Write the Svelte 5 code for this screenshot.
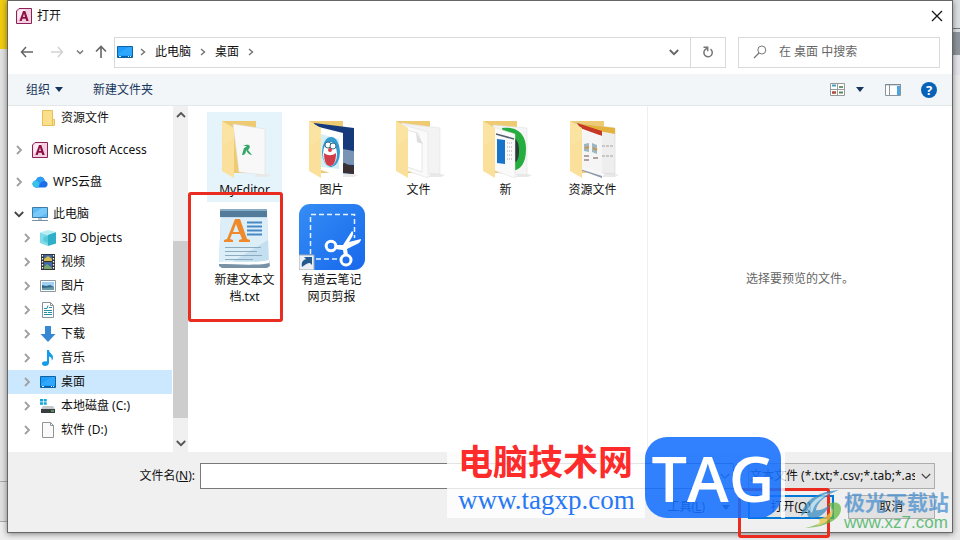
<script>
  const places = [
    { name: '资源文件', icon: 'folder', level: 1, gap: true },
    { name: 'Microsoft Access', icon: 'access', level: 0, arrow: 'right', gap: true },
    { name: 'WPS云盘', icon: 'cloud', level: 0, arrow: 'right', gap: true },
    { name: '此电脑', icon: 'pc', level: 0, arrow: 'down' },
    { name: '3D Objects', icon: 'cube', level: 1, arrow: 'right' },
    { name: '视频', icon: 'film', level: 1, arrow: 'right' },
    { name: '图片', icon: 'picture', level: 1, arrow: 'right' },
    { name: '文档', icon: 'doc', level: 1, arrow: 'right' },
    { name: '下载', icon: 'down', level: 1, arrow: 'right' },
    { name: '音乐', icon: 'music', level: 1, arrow: 'right' },
    { name: '桌面', icon: 'desktop', level: 1, arrow: 'right', selected: true },
    { name: '本地磁盘 (C:)', icon: 'disk', level: 1, arrow: 'right' },
    { name: '软件 (D:)', icon: 'page', level: 1, arrow: 'right' }
  ];
  const files = [
    { name: 'MyEditor', icon: 'editor', hover: true },
    { name: '图片', icon: 'photos' },
    { name: '文件', icon: 'papers' },
    { name: '新', icon: 'fresh' },
    { name: '资源文件', icon: 'resources' },
    { name: '新建文本文档.txt', icon: 'text', marked: true },
    { name: '有道云笔记网页剪报', icon: 'clip' }
  ];
</script>

{#snippet accessIcon()}
  <svg width="16" height="16" viewBox="0 0 16 16"><path d="M3 .5h12.500v15H.5V3z" fill="#f3cfe0" stroke="#8c2158" /><path d="M1.500 4 4 1.500h6L1.500 12z" fill="#fff" opacity=".6" /><path d="M3.500 13 7 3h2.300l3.400 10h-2.400l-.7-2.200H6.400L5.700 13zM7 9h2L8 5.600z" fill="#8a1045" fill-rule="evenodd" /></svg>
{/snippet}

{#snippet desktopIcon()}
  <svg width="16" height="16" viewBox="0 0 16 16"><path d="M.5 2.500h15v11H.5z" fill="#1e9dfa" stroke="#0b62a5" /><path d="M1 10 11 3h4v8H1z" fill="#38aeff" opacity=".6" /><path d="M1 12.500h14" stroke="#0762ab" /><path d="M2 12.500h2M11 12.500h1M13 12.500h1" stroke="#d7efff" /></svg>
{/snippet}

{#snippet chevron(dir, weight = 1.8)}
  <svg class="chev" width="10" height="10" viewBox="0 0 10 10">
    <path d={dir === 'down' ? 'M.8 3 5 7.200 9.200 3' : dir === 'up' ? 'M1 7 5 3l4 4' : 'M3 1l4 4-4 4'} fill="none" stroke="currentColor" stroke-width={weight} />
  </svg>
{/snippet}

{#snippet separator()}
  <span class="sep"><svg width="6" height="8" viewBox="0 0 6 8"><path d="M1 1l3.500 3L1 7" fill="none" stroke="#777" stroke-width="1.500" /></svg></span>
{/snippet}

{#snippet placeIcon(kind)}
  {#if kind === 'access'}
    {@render accessIcon()}
  {:else if kind === 'desktop'}
    {@render desktopIcon()}
  {:else}
    <svg width="16" height="16" viewBox="0 0 16 16">
      {#if kind === 'folder'}
        <path d="M2.500.5h10v9h2v6h-12z" fill="#fbdf8b" stroke="#e6bf5a" /><path d="M12.500 9.500v6" stroke="#e6bf5a" />
      {:else if kind === 'cloud'}
        <path d="M4.500 13.500C1 13.500 0 10 1 8.300 1.800 6.800 3.500 6.500 4 6.500 5 3.300 7.500 2.500 9.500 3c2.500.5 3 2.500 3.200 4C15 7.500 16 9 15.500 11c-.5 2-2 2.500-3.500 2.500z" fill="#1d6eea" /><path d="M4 6.500c1-3.200 3.500-4 5.500-3.500 2 .5 3 2.300 3.200 4C9 7 8 10 6 13.500H4.500C1 13.500 0 10 1 8.300c.7-1.300 2-1.800 3-1.800z" fill="#2e9df2" /><path d="M1 8.300C2 6.500 5 6 6.500 8 8 10 7 12 6 13.500H4.500C1 13.500 0 10 1 8.300z" fill="#38c4ea" />
      {:else if kind === 'pc'}
        <path d="M.5 1.500h15v10H.5z" fill="#5dbcf5" stroke="#3f7ba4" /><path d="M1 8 10 2h5v5L7 11H1z" fill="#8ed3fb" opacity=".6" /><path d="M6 12h4v2H6z" fill="#b9c9d3" /><path d="M0 14.500h16" stroke="#7890a0" />
      {:else if kind === 'cube'}
        <path d="M8 4l8-2v11.500L8 16z" fill="#2fb0c8" /><path d="M0 2.500 8 5v11l-8-3z" fill="#7fdbe7" /><path d="M8 0l8 2-8 3-8-2.500z" fill="#b8edf3" /><path d="M3.500 7 8 5.500V13l-4.500-2z" fill="#3bbdd0" opacity=".6" />
      {:else if kind === 'film'}
        <path d="M1 0h14v16H1z" fill="#30333b" /><path d="M4 1h8v6H4zM4 8h8v7H4z" fill="#4168a4" /><path d="M4 5l4-3 4 3v2H4z" fill="#d7bc4e" /><path d="M4 13l3-3 5 4v1H4z" fill="#79a66b" /><path d="M2.500 1v15M13.500 1v15" stroke="#fff" stroke-width="1.300" stroke-dasharray="1.500 1.500" />
      {:else if kind === 'picture'}
        <path d="M.5 2.500h15v11H.5z" fill="#fff" stroke="#8d9aa4" /><path d="M2 4h12v8H2z" fill="#9ed1f4" /><path d="M2 7l4 1 4-1 4 2v3H2z" fill="#326785" /><path d="M2 10l12-1v3H2z" fill="#669ba7" />
      {:else if kind === 'doc'}
        <path d="M2.500.5h8l3 3v12h-11z" fill="#fff" stroke="#87939b" /><path d="M10.500.5v3h3" fill="none" stroke="#87939b" /><path d="M4 6.500h3l1-3M9 5.500h3M4 8.500h8M4 10.500h3M8 10.500h4M4 12.500h8" fill="none" stroke="#258fa8" />
      {:else if kind === 'down'}
        <path d="M5 0h6v8h4.500L8 16 .5 8H5z" fill="#3788d3" />
      {:else if kind === 'music'}
        <path d="M7 0h2c0 3 4 4 4 7.500 0 1.500-.6 2.500-1.200 3.200C12 8 11 7 9 6.500V13c0 2-2 3-4 3s-3-1-3-2.500S4 11 7 11.500z" fill="#159ce8" />
      {:else if kind === 'disk'}
        <path d="M0 1h3v2.500H0zM3.700 1h3v2.500h-3zM0 4.200h3v2.500H0zM3.700 4.200h3v2.500h-3z" fill="#16a5d8" /><path d="M3 8h10l2 3H1z" fill="#c5c9cc" /><path d="M1 11h14v4H1z" fill="#3a3d40" /><path d="M11 13h3" stroke="#6bec74" />
      {:else}
        <path d="M2.500.5h8l3 3v12h-11z" fill="#fafafa" stroke="#949494" /><path d="M10.500.5v3h3" fill="none" stroke="#949494" />
      {/if}
    </svg>
  {/if}
{/snippet}

{#snippet fileIcon(kind)}
  <svg width="66" height="66" viewBox="0 0 66 66">
    {#if kind === 'text'}
      <path d="M7 56h50l1 6-3 2H10l-3-2z" fill="#7893a8" />
      <path d="M9 6h46l2 52H7z" fill="#c3dff0" /><path d="M9 14h46l1 22L20 58H7z" fill="#e7f4fa" opacity=".7" />
      <path d="M8 6h47v7H8z" fill="#537c9b" /><path d="M8 5h47v2H8z" fill="#86adc5" />
      <path d="M7 58c17-2 34 2 50-2v3c-12 3-34 1-50 1z" fill="#fff" />
      <path d="M12 38v-2l3-1 8-20h5l7 20 3 1v2H27v-2l3-1-2-5h-8l-2 5 3 1v2zm9-10h6l-3-8z" fill="#ee8a2b" fill-rule="evenodd" />
      <path d="M35 18.500h15M35 22.500h15M35 26.500h15M35 30.500h15" stroke="#4689c6" stroke-width="2" />
      <path d="M13 43.500h36M13 47.500h32M13 51.500h37M13 55.500h28" stroke="#8eacc0" />
    {:else if kind === 'clip'}
      <defs><linearGradient id="clipBlue" x1="0" y1="0" x2="1" y2="1"><stop offset="0" stop-color="#358df4" /><stop offset="1" stop-color="#1768ec" /></linearGradient></defs>
      <rect width="66" height="66" rx="11" fill="url(#clipBlue)" />
      <path d="M11.500 50V10.500h44V34M17 55h24" fill="none" stroke="#e6f2ff" stroke-width="1.500" stroke-dasharray="5 3" />
      <g fill="none" stroke="#fff" stroke-width="3"><circle cx="32" cy="42" r="4.800" /><circle cx="47" cy="56" r="5" /></g>
      <path d="M36 41l8 0 9-14c2 1 1 4 0 6l-3 5 12-3c0 3-3 5-6 6l-8 4 1 6-4 1-1-6-8-1z" fill="#fff" />
      <path d="M0 51h15v15H0z" fill="#edf1f5" stroke="#9cabb8" /><path d="M3 63c-1-5 1-7 4-8l-2-2h8v8l-2-2c-3 0-5 2-8 4z" fill="#235a90" />
    {:else}
      <path d="M42 63h13l4-2-13-3z" fill="#e9e9e9" />
      <path d="M10 7h34v52H20z" fill="#eecb72" />
      {#if kind === 'photos'}
        <path d="M15 9 55 14v46l-28-2z" fill="#153a7b" /><path d="M38 34l17 3v14l-17-1z" fill="#7893b3" /><path d="M40 50l6-1 3 2 6 1v8l-15-2z" fill="#3b3031" />
        <path d="M20 13l24 6v45l-22-8z" fill="#fff" /><path d="M22 20l18 5v30l-18-2z" fill="#d4eef9" />
        <ellipse cx="32" cy="38" rx="9" ry="15" fill="#349bd1" /><ellipse cx="31" cy="40" rx="7" ry="12" fill="#fff" /><path d="M25 39c4 3 8 3 12 0 0 8-2 13-6 13s-6-5-6-13z" fill="#d13c49" /><circle cx="29" cy="31" r="3" fill="#fff" stroke="#376b86" /><circle cx="34" cy="32" r="3" fill="#fff" stroke="#376b86" /><circle cx="31" cy="36" r="2" fill="#df3e45" />
      {:else if kind === 'fresh'}
        <path d="M20 11 54 14v47l-28-2z" fill="#f5f5f5" stroke="#ddd" stroke-width=".5" /><path d="M29 14c18-2 24 9 24 21 0 14-5 22-16 22z" fill="#25ae3f" /><path d="M36 23c8 0 10 6 10 14s-2 12-8 13z" fill="#293b37" />
        <path d="M20 13l22 7v44l-22-8z" fill="#fafafa" stroke="#ddd" stroke-width=".5" /><path d="M23 20l18 5" stroke="#556170" stroke-width="1.500" /><path d="M24 25l8 1v24l-8-1z" fill="#1774ca" /><path d="M34 29h6M34 33h6M34 37h6M34 41h6M34 45h6" stroke="#aaa" stroke-dasharray="1 1" />
      {:else if kind === 'resources'}
        <path d="M15 9l40 5v46l-28-2z" fill="#eee" stroke="#ccc" stroke-width=".5" /><path d="M15 9l40 5v6l-32-6z" fill="#e4b33d" /><path d="M42 32h12M42 42h12" stroke="#a99f9f" stroke-dasharray="3 1" />
        <path d="M20 12l22 7v45l-22-8z" fill="#f7f7f7" /><path d="M17 9l25 8v5l-22-8z" fill="#c53825" /><path d="M20 17l22 5v36l-22-6z" fill="#f5f5f6" /><path d="M24 30l5-1v9l-5-1zM32 29l5 2v9l-5-2z" fill="#9bb8c3" /><path d="M25 34l4-1M33 34l4 2" stroke="#ce974e" stroke-width="2" /><path d="M24 42h5M33 44h5M24 46h5" stroke="#b2a09c" stroke-width="2" /><path d="M20 55l22 7v2l-22-8z" fill="#8d99ae" />
      {:else if kind === 'papers'}
        <path d="M15 9l39 5v46l-28-1z" fill="#f3f3f3" stroke="#ddd" stroke-width=".5" /><path d="M18 11l24 7v46l-23-8z" fill="#fafafa" stroke="#ddd" stroke-width=".5" /><path d="M21 16l11 3 4 11v28l-15-5z" fill="#fff" stroke="#d8d8d0" stroke-width=".6" /><path d="M30 18l7 12-6-2z" fill="#ddd" />
      {:else}
        <path d="M21 10l32 5v46l-26-3z" fill="#f8f8f8" stroke="#ddd" stroke-width=".5" /><path d="M31 32c6-3 9 0 5 4l4 5c-3 0-5-3-6-5 0 3-1 5-4 5l2-7c2-1 4-2 1-2z" fill="#33a66a" />
      {/if}
      <path d="M10 7 22 14v50L10 57z" fill="#fae09a" /><path d="M10 7 22 14v10L11 32z" fill="#fff0bd" opacity=".25" />
    {/if}
  </svg>
{/snippet}

<div class="screen">
  <div class="backdrop" aria-hidden="true"><i class="yellow"></i><i class="grey"></i></div>

  <main class="dialog">
    <header class="title">
      {@render accessIcon()}
      <h1>打开</h1>
      <button class="plain close" aria-label="关闭"><svg width="12" height="12" viewBox="0 0 12 12"><path d="M1 1l10 10M11 1 1 11" stroke="#111" stroke-width="1.200" /></svg></button>
    </header>

    <nav class="navigate">
      <button class="plain back" aria-label="后退"><svg width="14" height="12" viewBox="0 0 14 12"><path d="M6 1 1.500 6 6 11M1.500 6H13" fill="none" stroke="#666" stroke-width="1.500" /></svg></button>
      <button class="plain forward" aria-label="前进"><svg width="14" height="12" viewBox="0 0 14 12"><path d="M8 1l4.500 5L8 11M12.500 6H1" fill="none" stroke="#d2d2d2" stroke-width="1.500" /></svg></button>
      <button class="plain recent" aria-label="最近"><svg width="8" height="8" viewBox="0 0 8 8"><path d="M1 2.500 4 5.500 7 2.500" fill="none" stroke="#777" stroke-width="1.500" /></svg></button>
      <button class="plain up" aria-label="上移"><svg width="12" height="14" viewBox="0 0 12 14"><path d="M1 6.500 6 1.500l5 5M6 1.500V13" fill="none" stroke="#666" stroke-width="1.600" /></svg></button>
      <div class="address">
        {@render desktopIcon()}
        {@render separator()}
        <a href="#pc">此电脑</a>
        {@render separator()}
        <a href="#desktop">桌面</a>
        {@render separator()}
        <button class="plain history" aria-label="历史记录">{@render chevron('down')}</button>
        <button class="plain refresh" aria-label="刷新"><svg width="12" height="12" viewBox="0 0 12 12"><path d="M8.500 3.200A4.200 4.200 0 1 1 2.800 4L5.300 1.800M1.500 1.300h4.200v4" fill="none" stroke="#777" stroke-width="1.500" /></svg></button>
      </div>
      <label class="search">
        <svg width="14" height="14" viewBox="0 0 14 14"><circle cx="8.800" cy="5" r="4" fill="none" stroke="#777" /><path d="M6 8 1 13" stroke="#777" stroke-width="1.300" /></svg>
        <input type="search" aria-label="搜索" placeholder="在 桌面 中搜索" />
      </label>
    </nav>

    <div class="toolbar">
      <button class="plain">组织 <svg width="8" height="5" viewBox="0 0 8 5"><path d="M0 0h8L4 5z" fill="#17365d" /></svg></button>
      <button class="plain">新建文件夹</button>
      <div class="tools">
        <button class="plain" aria-label="更改视图"><svg width="15" height="13" viewBox="0 0 15 13"><path d="M.5.5h14v12H.5zM7.500.5v12M.5 6.500h14" fill="#fff" stroke="#999" /><path d="M2 2.500h4" stroke="#42a0bc" stroke-width="2" /><path d="M9 4h4" stroke="#6c9972" stroke-width="2" /><path d="M2 9.500h4" stroke="#b04b3c" stroke-width="2.500" /><path d="M9 9.500h4" stroke="#5c8660" stroke-width="2" /></svg></button>
        <button class="plain more" aria-label="更多选项"><svg width="8" height="5" viewBox="0 0 8 5"><path d="M0 0h8L4 5z" fill="#17365d" /></svg></button>
        <button class="plain pane" aria-label="预览窗格"><svg width="16" height="12" viewBox="0 0 16 12"><path d="M.5.5h15v11H.5zM4.500.5v11" fill="#fff" stroke="#8a959d" /><path d="M0 .8h16" stroke="#7a858d" /><path d="M12 2h3v9h-3z" fill="#4ba7e3" /></svg></button>
        <button class="plain help" aria-label="帮助">?</button>
      </div>
    </div>

    <div class="content">
      <ul class="tree">
        {#each places as p}
          <li class:gap={p.gap} class:child={p.level === 1} class:selected={p.selected}>
            <span class="expand" class:open={p.arrow === 'down'}>{#if p.arrow}{@render chevron(p.arrow)}{/if}</span>
            {@render placeIcon(p.icon)}
            <span>{p.name}</span>
          </li>
        {/each}
      </ul>
      <div class="scroll">
        {@render chevron('up')}
        <i></i>
        {@render chevron('down')}
      </div>
      <ul class="files">
        {#each files as f}
          <li class:hover={f.hover} class:marked={f.marked}>
            {@render fileIcon(f.icon)}
            <span>{f.name}</span>
          </li>
        {/each}
      </ul>
      <aside>选择要预览的文件。</aside>
    </div>

    <footer>
      <div class="row">
        <label class="name" for="filename">文件名(<u>N</u>):</label>
        <div class="combo"><input id="filename" type="text" />{@render chevron('down', 1.2)}</div>
        <div class="type">
          <select aria-label="文件类型"><option>文本文件 (*.txt;*.csv;*.tab;*.asc;*.tmp)</option></select>
          {@render chevron('down', 1.2)}
        </div>
      </div>
      <div class="row actions">
        <button class="plain toolmenu">工具(<u>L</u>)<svg width="8" height="5" viewBox="0 0 8 5"><path d="M0 0h8L4 5z" fill="#444" /></svg></button>
        <div class="pair">
          <div class="opener"><button class="push primary">打开(<u>O</u>)</button></div>
          <button class="push">取消</button>
        </div>
      </div>
    </footer>
  </main>

  <div class="brand">
    <div class="site"><strong>电脑技术网</strong><span>www.tagxp.com</span></div>
    <div class="tag">TAG</div>
  </div>
  <div class="mirror">
    <svg width="44" height="42" viewBox="0 0 44 42">
      <path d="M1 27C3 12 18 2 39 1 26 6 17 13 16 21c3 1 8-1 14-5-5 9-11 13-17 13-5 0-7-3-5-8-3 3-5 5-7 6z" fill="#3b8fc4" />
      <path d="M8 20C13 10 22 5 31 4 20 9 14 15 12 24z" fill="#b3dcf0" />
      <path d="M28 15c8-3 13-1 13 5 0 9-13 18-36 19 15-3 24-9 26-15 1-4 0-7-3-9z" fill="#65b83f" />
      <path d="M18 30c7-1 12-5 15-11 2 9-7 16-17 18 4-3 5-5 2-7z" fill="#e5c53f" />
    </svg>
    <div><strong>极光下载站</strong><span>www.xz7.com</span></div>
  </div>
</div>

<style>
  :global(body) { margin: 0; }
  .screen {
    position: relative;
    display: flex;
    box-sizing: border-box;
    min-height: 100vh;
    padding: 0 7px 7px;
    overflow: hidden;
    background: #e9e9e9;
    font-family: "Noto Sans", "Noto Sans CJK SC", sans-serif;
    font-size: 12px;
    line-height: 16px;
    color: #111;
  }
  .backdrop { position: absolute; inset: 0; background: linear-gradient(#e2e2e2 0 481px, #aaa 481px 482px, #e0e0e0 482px 521px, #aaa 521px 522px, #eee 522px); }
  .backdrop .yellow { position: absolute; left: 0; top: 0; width: 8px; height: 49px; background: #f0cc12; }
  .backdrop .grey { position: absolute; right: 0; top: 0; width: 8px; height: 100%; background: linear-gradient(#dcdfe1 0 28px, #777 28px 29px, #dcdfe1 29px 32px, #8e959c 32px 55px, #e4e4ea 55px 75px, #ebebeb 75px); }
  .dialog {
    position: relative;
    display: flex;
    flex: 1;
    flex-direction: column;
    min-width: 0;
    border: 1px solid #666;
    background: #fff;
    box-shadow: 0 1px 6px #0007;
  }
  ul { margin: 0; padding: 0; list-style: none; }
  svg { flex: none; display: block; }
  .plain { display: flex; align-items: center; margin: 0; padding: 0; border: 0; background: none; color: inherit; font: inherit; }
  .title { display: flex; align-items: center; height: 29px; padding: 0 9px 0 8px; gap: 5px; }
  h1 { margin: 0; font-size: 12px; font-weight: 400; }
  .close { margin-left: auto; }
  .navigate { display: flex; align-items: center; height: 44px; padding: 0 12px; }
  .forward { margin-left: 16px; }
  .recent { margin-left: 12px; }
  .up { margin-left: 11px; }
  .address { display: flex; flex: 1; align-items: center; box-sizing: border-box; height: 31px; margin-left: 7px; padding-left: 2px; border: 1px solid #d9d9d9; }
  .sep { padding: 0 8px 0 7px; }
  .sep + a { padding: 0 2px 0 1px; }
  .address a { color: inherit; text-decoration: none; }
  .history { margin-left: auto; padding: 0 11px; color: #666; }
  .refresh { height: 29px; padding: 0 11px; border-left: 1px solid #d9d9d9; }
  .search { display: flex; align-items: center; box-sizing: border-box; width: 202px; height: 31px; margin-left: 12px; padding-left: 14px; gap: 12px; border: 1px solid #d9d9d9; }
  .search input { flex: 1; min-width: 0; padding: 0; border: 0; outline: 0; font: inherit; }
  .search input::placeholder { color: #666; opacity: 1; }
  .toolbar { display: flex; align-items: center; box-sizing: border-box; height: 32px; padding: 0 15px 0 18px; gap: 30px; border-bottom: 1px solid #e3e8eb; background: #f3f6f8; color: #17365d; }
  .toolbar > button { gap: 5px; }
  .tools { display: flex; align-items: center; margin-left: auto; }
  .more { margin-left: 11px; }
  .pane { margin-left: 21px; }
  .help { justify-content: center; width: 16px; height: 16px; margin-left: 20px; border-radius: 50%; background: #0863b8; color: #fff; font-size: 13px; font-weight: 700; }
  .content { display: flex; flex: 1; min-height: 0; }
  .tree { width: 165px; overflow: hidden; white-space: nowrap; }
  .tree li { display: flex; align-items: center; height: 24px; gap: 5px; padding-left: 6px; margin-right: 1px; }
  .tree li.child { padding-left: 14px; }
  .tree li.gap { margin-bottom: 8px; }
  .tree li.selected { background: #cce8ff; }
  .expand { width: 13px; color: #a0a0a0; }
  .expand.open { color: #444; }
  .scroll { display: flex; flex-direction: column; justify-content: space-between; align-items: center; box-sizing: border-box; width: 15px; padding: 4px 0; background: #f0f0f0; color: #555; }
  .scroll i { width: 15px; height: 177px; margin-top: 101px; background: #cdcdcd; }
  .files { display: grid; flex: 1; grid-template-columns: repeat(auto-fill, 75px); grid-auto-rows: 90px; align-content: start; gap: 0 12px; padding: 6px 0 0 19px; border-right: 1px solid #f0f0f0; }
  .files li { position: relative; display: flex; flex-direction: column; align-items: center; box-sizing: border-box; padding-top: 2px; }
  .files li.hover { background: #e5f3fb; }
  .files span { max-width: 64px; margin-top: 1px; line-height: 17px; text-align: center; overflow-wrap: anywhere; }
  .marked::after { content: ''; position: absolute; left: -19px; top: -10px; right: -1px; height: 124px; border: 3px solid #ea2b1f; border-radius: 3px; }
  aside { display: flex; align-items: center; justify-content: center; width: 304px; color: #666; }
  footer { padding: 11px 17px 13px; background: #f0f0f0; }
  .row { display: flex; align-items: center; }
  .name { width: 170px; margin-right: 5px; text-align: right; }
  .combo { position: relative; display: flex; flex: 1; }
  .combo input { flex: 1; box-sizing: border-box; height: 26px; border: 1px solid #7a7a7a; outline: 0; background: #fff; font: inherit; }
  .row .chev { position: absolute; right: 4px; top: 8px; color: #444; }
  .type { position: relative; width: 187px; margin-left: 14px; }
  select { display: block; box-sizing: border-box; width: 100%; height: 26px; padding: 0 19px 0 1px; border: 1px solid #adadad; border-radius: 0; appearance: none; background: #e5e5e5; color: inherit; font: inherit; }
  .actions { justify-content: flex-end; margin-top: 6px; }
  .toolmenu { margin-right: 18px; }
  .toolmenu svg { margin-left: 17px; }
  .pair { display: flex; width: 187px; gap: 14px; }
  .opener { position: relative; display: flex; flex: 1; }
  .opener::after { content: ''; position: absolute; inset: -7px 4px -19px -10px; border: 3px solid #ea2b1f; border-radius: 3px; }
  .push { flex: 1; box-sizing: border-box; height: 24px; padding: 0; border: 1px solid #adadad; background: #e1e1e1; color: inherit; font: inherit; }
  .push.primary { border: 2px solid #0078d7; }
  .brand { position: absolute; right: 175px; bottom: 22px; display: flex; box-sizing: border-box; width: 338px; height: 81px; justify-content: space-between; padding: 0 4px 0 11px; background: linear-gradient(90deg, #fffc 198px, #fff0 198px 334px, #fffc 334px); }
  .site { display: flex; flex-direction: column; white-space: nowrap; }
  .site strong { font-family: "Noto Sans CJK SC", sans-serif; font-size: 35px; line-height: 46px; color: #fe2b2b; }
  .site span { font-family: "Liberation Serif", serif; font-size: 27px; line-height: 34px; color: #2878f4; }
  .tag { display: flex; align-items: center; justify-content: center; width: 136px; border-radius: 22px; background: #1470ffe0; color: #fff; font-family: "Open Sans", sans-serif; font-size: 63px; font-weight: 600; }
  .mirror { position: absolute; right: 11px; bottom: 8px; display: flex; align-items: center; opacity: .75; white-space: nowrap; }
  .mirror div { display: flex; flex-direction: column; }
  .mirror strong { font-family: "Noto Sans CJK SC", sans-serif; font-size: 21px; line-height: 26px; color: #4a8fcf; }
  .mirror span { font-family: "Liberation Sans", sans-serif; font-size: 17px; line-height: 18px; color: #35ad55; }
</style>
